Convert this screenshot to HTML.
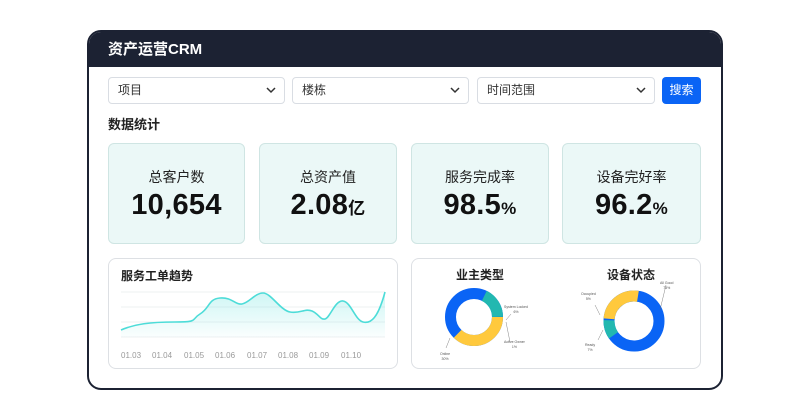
<!DOCTYPE html><html><head><meta charset="utf-8"><style>
body{margin:0;width:810px;height:420px;background:#fff;font-family:"Liberation Sans","Noto Sans CJK SC",sans-serif;position:relative;overflow:hidden}
.frame{position:absolute;left:87px;top:30px;width:632px;height:356px;border:2px solid #1c2233;border-radius:14px;overflow:hidden;background:#fff}
.hd{height:35px;background:#1c2233;color:#fff;font-size:15px;font-weight:bold;line-height:36px;padding-left:19px}
.abs{position:absolute}
.sel{position:absolute;top:77px;border:1px solid #d9dde3;border-radius:4px;font-size:12px;color:#333;line-height:25px;padding-left:9px;box-sizing:border-box;height:27px}
.sel svg{position:absolute;right:8px;top:9px}
.card{position:absolute;top:143px;height:101px;background:#ebf8f7;border:1px solid #cfe5e3;border-radius:6px;box-sizing:border-box;text-align:center}
.card .t{font-size:14px;color:#222;margin-top:23px}
.card .v{font-size:29px;font-weight:bold;color:#111;margin-top:2px;letter-spacing:0.3px}
.card .v small{font-size:17px}
.panel{position:absolute;top:258px;height:111px;border:1px solid #dde0e4;border-radius:8px;box-sizing:border-box}
.lab{position:absolute;top:351px;font-size:8px;color:#999}
.tiny{position:absolute;font-size:3.5px;color:#555;text-align:center;line-height:5px}
</style></head><body>
<div class="frame"><div class="hd">资产运营CRM</div></div>
<div class="sel" style="left:108px;width:177px">项目<svg width="10" height="7"><path d="M1 1l4 4 4-4" stroke="#333" stroke-width="1.5" fill="none"/></svg></div>
<div class="sel" style="left:292px;width:177px">楼栋<svg width="10" height="7"><path d="M1 1l4 4 4-4" stroke="#333" stroke-width="1.5" fill="none"/></svg></div>
<div class="sel" style="left:477px;width:178px">时间范围<svg width="10" height="7"><path d="M1 1l4 4 4-4" stroke="#333" stroke-width="1.5" fill="none"/></svg></div>
<div class="abs" style="left:662px;top:77px;width:39px;height:27px;background:#0a64f5;border-radius:4px;color:#fff;font-size:12px;text-align:center;line-height:27px">搜索</div>
<div class="abs" style="left:108px;top:114px;font-size:13px;font-weight:bold;color:#222">数据统计</div>
<div class="card" style="left:108px;width:137px"><div class="t">总客户数</div><div class="v">10,654</div></div>
<div class="card" style="left:259px;width:138px"><div class="t">总资产值</div><div class="v">2.08<small>亿</small></div></div>
<div class="card" style="left:411px;width:138px"><div class="t">服务完成率</div><div class="v">98.5<small>%</small></div></div>
<div class="card" style="left:562px;width:139px"><div class="t">设备完好率</div><div class="v">96.2<small>%</small></div></div>
<div class="panel" style="left:108px;width:290px"></div>
<div class="abs" style="left:121px;top:267px;font-size:12px;font-weight:bold;color:#222">服务工单趋势</div>
<svg class="abs" style="left:0;top:0" width="810" height="420">
<defs><linearGradient id="g" x1="0" y1="0" x2="0" y2="1"><stop offset="0" stop-color="#5de0dc" stop-opacity=".3"/><stop offset="1" stop-color="#5de0dc" stop-opacity=".03"/></linearGradient></defs>
<g stroke="#eef0f2" stroke-width="1"><line x1="121" y1="292" x2="385" y2="292"/><line x1="121" y1="307" x2="385" y2="307"/><line x1="121" y1="322" x2="385" y2="322"/><line x1="121" y1="337" x2="385" y2="337"/></g>
<path d="M121 330C135 324 150 322 175 322S190 320 200 314S208 299 220 298S235 305 242 304S255 293 263 293S280 310 290 312S305 308 312 311S320 320 325 319S335 300 343 301S355 320 363 322S378 318 385 292L385 337L121 337Z" fill="url(#g)"/>
<path d="M121 330C135 324 150 322 175 322S190 320 200 314S208 299 220 298S235 305 242 304S255 293 263 293S280 310 290 312S305 308 312 311S320 320 325 319S335 300 343 301S355 320 363 322S378 318 385 292" fill="none" stroke="#4ddcd8" stroke-width="1.6"/>
<g fill="none" stroke-width="11">
<circle cx="474" cy="317" r="23.5" stroke="#0a64f5"/>
<circle cx="474" cy="317" r="23.5" stroke="#ffc93d" stroke-dasharray="55 200"/>
<circle cx="474" cy="317" r="23.5" stroke="#22b8b0" stroke-dasharray="26 200" transform="rotate(-64 474 317)"/>
<circle cx="634" cy="321" r="25" stroke="#0a64f5"/>
<circle cx="634" cy="321" r="25" stroke="#ffc93d" stroke-dasharray="41 200" transform="rotate(-175 634 321)"/>
<circle cx="634" cy="321" r="25" stroke="#22b8b0" stroke-dasharray="16 200" transform="rotate(145 634 321)"/>
</g>
<g stroke="#666" stroke-width=".4" fill="none"><path d="M506 320l5-6M506 322l4 20M450 338l-4 10M600 315l-5-10M603 330l-5 10M660 310l6-25"/></g>
</svg>
<div class="panel" style="left:411px;width:290px"></div>
<div class="abs" style="left:456px;top:266px;font-size:12px;font-weight:bold;color:#222">业主类型</div>
<div class="abs" style="left:607px;top:266px;font-size:12px;font-weight:bold;color:#222">设备状态</div>
<div class="tiny" style="left:504px;top:305px">System Locked<br>6%</div>
<div class="tiny" style="left:504px;top:340px">Active Owner<br>1%</div>
<div class="tiny" style="left:440px;top:352px">Online<br>30%</div>
<div class="tiny" style="left:581px;top:292px">Occupied<br>5%</div>
<div class="tiny" style="left:585px;top:343px">Ready<br>7%</div>
<div class="tiny" style="left:660px;top:281px">All Good<br>73%</div>
<div class="lab" style="left:121px">01.03</div><div class="lab" style="left:152px">01.04</div><div class="lab" style="left:184px">01.05</div><div class="lab" style="left:215px">01.06</div><div class="lab" style="left:247px">01.07</div><div class="lab" style="left:278px">01.08</div><div class="lab" style="left:309px">01.09</div><div class="lab" style="left:341px">01.10</div>
</body></html>
